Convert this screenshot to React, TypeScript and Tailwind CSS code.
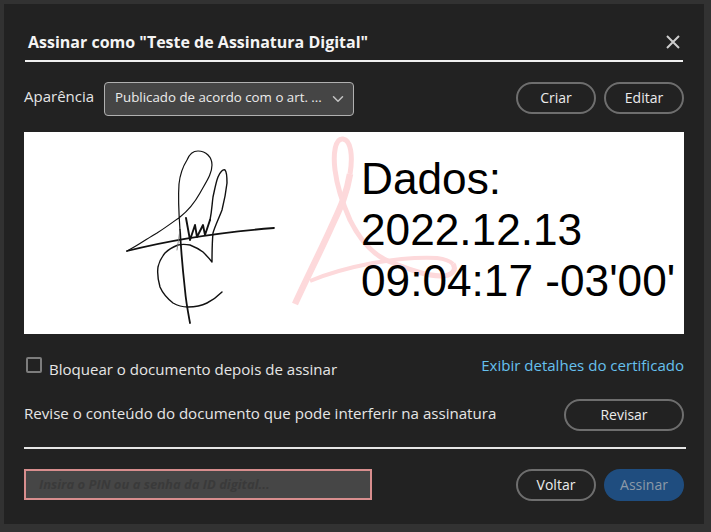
import React from "react";
import { ChevronDown } from "lucide-react";

const PillButton: React.FC<{ label: string; className?: string }> = ({ label, className = "" }) => (
  <button
    type="button"
    className={`h-[32px] rounded-full border-2 border-[#6e6e6e] bg-transparent pb-[2px] text-[14px] text-[#ececec] ${className}`}
  >
    {label}
  </button>
);

const SignaturePreview: React.FC = () => (
  <svg viewBox="0 0 660 202" className="block h-[202px] w-[660px]" fill="none">
    {/* Acrobat watermark */}
    <g stroke="#fdd9db">
      <path d="M271 172 C282 148 296 120 306 98 C314 80 322 66 326 42" strokeWidth="6.5" />
      <path d="M326 42 C329 24 327 8 319 7 C311 6 309 22 311 38 C313 54 318 70 326 88 C336 108 348 122 364 129 C384 137 402 144 417 144 C428 144 433 138 429 132" strokeWidth="5" />
      <path d="M286 149 C305 141 328 135 349 131 C372 127 395 125 413 126 C421 127 426 129 429 132" strokeWidth="4" />
    </g>
    {/* signature */}
    <g stroke="#111" strokeLinecap="round" strokeLinejoin="round">
      <path d="M103 119 C150 107 200 100 250 96" strokeWidth="1.8" />
      <path d="M103 119 C115 113 124 106 133 101 C141 96 149 90 156 85 C165 78 171 70 176 61 C182 50 188 42 188 33 C188 25 182 19 174 19 C168 19 165 23 163 28 C158 36 156 42 155 52 C154 66 155 84 156 98" strokeWidth="1.2" />
      <path d="M156 98 C157 120 159 140 161 158 C162 170 164 180 166 191" strokeWidth="1.8" />
      <path d="M162 86 L166 108 L171 93 L173 105 L179 93 L181 103 L186 88" strokeWidth="1.9" />
      <path d="M186 88 C188 78 188 72 189 65 C191 56 192 50 194 45 C196 40 199 37 201 38 C203 40 203 46 203 51 C202 60 200 70 198 78 C195 86 191 94 189 101 C188 112 188 120 188 130 C185 126 182 123 179 120 C175 117 171 115 166 113 C161 112 158 112 154 113 C149 115 145 117 141 121 C137 126 135 130 134 135 C133 142 134 148 136 155 C139 162 144 167 149 171 C154 174 159 175 164 175 C171 175 177 174 183 171 C189 168 194 164 198 160" strokeWidth="1.4" />
      <path d="M156 98 L153 118" strokeWidth="0.8" stroke="#777" />
    </g>
  </svg>
);

export default function App() {
  return (
    <div className="h-[532px] w-[711px] bg-[#323232] pb-[8px] pl-[4px] pr-[7px] pt-[4px] font-['Open_Sans','Noto_Sans',sans-serif]">
      <div className="flex h-[520px] flex-col bg-[#222222] px-[20px] pt-[20px]">
        <div className="mx-[1px] flex h-[38px] items-center justify-between border-b-2 border-[#f0f0f0] pl-[3px] pr-[3px]">
          <h1 className="text-[16px] font-bold text-[#f4f4f4]">Assinar como "Teste de Assinatura Digital"</h1>
          <svg viewBox="0 0 14 14" className="h-[14px] w-[14px]" fill="none" stroke="#cdcdcd" strokeWidth="2">
            <path d="M1 1L13 13M13 1L1 13" />
          </svg>
        </div>

        <div className="mt-[20px] flex h-[34px] items-center">
          <span className="mb-[5px] text-[15px] text-[#e6e6e6]">Aparência</span>
          <div className="ml-[10px] flex h-[34px] w-[250px] items-center justify-between rounded-[4px] border border-[#b0b0b0] bg-[#454545] pl-[10px] pr-[6px] text-[13.3px] text-[#ececec]">
            <span className="mb-[2px]">Publicado de acordo com o art. ...</span>
            <ChevronDown className="h-[18px] w-[18px] text-[#c4c4c4]" strokeWidth={2} />
          </div>
          <div className="ml-auto flex gap-[8px] self-start">
            <PillButton label="Criar" className="w-[80px]" />
            <PillButton label="Editar" className="w-[80px]" />
          </div>
        </div>

        <div className="relative mt-[16px] h-[202px] bg-white">
          <SignaturePreview />
          <div className="absolute left-[337px] top-[21px] font-['Liberation_Sans',sans-serif] text-[44.2px] leading-[51px] text-black">
            <div>Dados:</div>
            <div>2022.12.13</div>
            <div>09:04:17 -03'00'</div>
          </div>
        </div>

        <div className="mt-[22px] flex h-[21px] items-start justify-between">
          <label className="flex text-[15.05px] leading-[20px] text-[#e6e6e6]">
            <span className="ml-[2px] mr-[7px] mt-[1px] h-[16px] w-[16px] rounded-[2px] border-2 border-[#7d7d7d]" />
            <span className="mt-[3px]">Bloquear o documento depois de assinar</span>
          </label>
          <a className="-mt-[1px] text-[15.05px] leading-[20px] text-[#66c0ee]">Exibir detalhes do certificado</a>
        </div>

        <div className="mt-[22px] flex items-center justify-between">
          <span className="mb-[4px] text-[15.1px] text-[#e6e6e6]">Revise o conteúdo do documento que pode interferir na assinatura</span>
          <PillButton label="Revisar" className="w-[120px]" />
        </div>

        <div className="-mr-[2px] mt-[16px] border-t-2 border-[#e6e6e6]" />

        <div className="mt-[20px] flex items-start justify-between">
          <div className="flex h-[31px] w-[348px] items-center border-2 border-[#d88e8e] bg-[#464646] pl-[13px] text-[13px] font-bold italic text-[#3a3a3a]">
            Insira o PIN ou a senha da ID digital...
          </div>
          <div className="flex gap-[8px]">
            <PillButton label="Voltar" className="w-[80px]" />
            <button type="button" className="h-[32px] w-[80px] rounded-full bg-[#1f4d7f] pb-[2px] text-[14px] text-[#8c9aa8]">
              Assinar
            </button>
          </div>
        </div>
      </div>
    </div>
  );
}
